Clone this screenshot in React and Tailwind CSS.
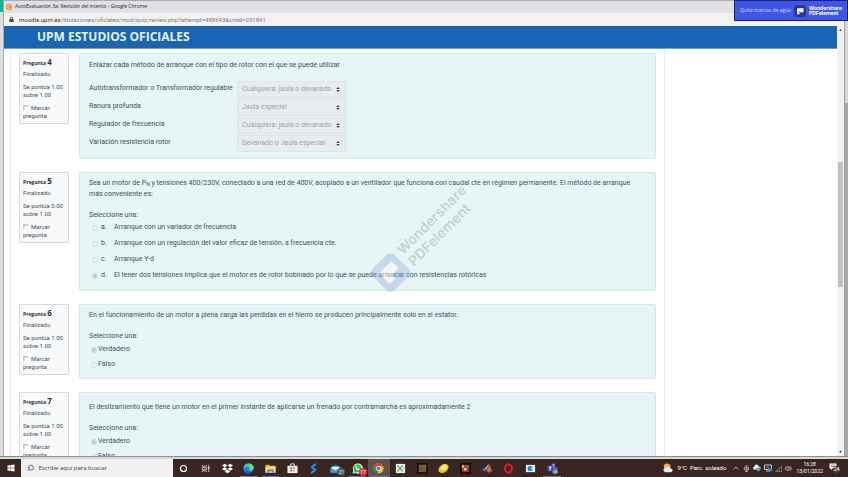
import { FaWindows, FaDropbox, FaLock } from "react-icons/fa";
import { Search, ChevronUp, Volume2 } from "lucide-react";

const OPTIONS = ["Cualquiera: jaula o devanado", "Jaula especial", "Devanado o Jaula especial"];

const MATCHES = [
  { id: "m1", label: "Autotransformador o Transformador regulable", value: OPTIONS[0] },
  { id: "m2", label: "Ranura profunda", value: OPTIONS[1] },
  { id: "m3", label: "Regulador de frecuencia", value: OPTIONS[0] },
  { id: "m4", label: "Variación resistencia rotor", value: OPTIONS[2] },
];

const CHOICES = [
  { key: "a.", text: "Arranque con un variador de frecuencia" },
  { key: "b.", text: "Arranque con un regulación del valor eficaz de tensión, a frecuencia cte." },
  { key: "c.", text: "Arranque Y-d" },
  { key: "d.", text: "El tener dos tensiones implica que el motor es de rotor bobinado por lo que se puede arrancar con resistencias rotóricas", checked: true },
];

const radioClass =
  "size-[6px] shrink-0 appearance-none rounded-full border border-[#d3dadb] bg-[#eef5f6] checked:bg-[#a9b1b3] checked:shadow-[inset_0_0_0_1px_#e4e9ea]";

function PdfLogo({ className, back, front }) {
  return (
    <svg viewBox="0 0 24 24" className={className} aria-hidden="true">
      <rect width="24" height="24" rx="5" fill={back} />
      <path d="M6 6.5h13v8h-7v-1H6z M6 14.5h5v4H6z" fill={front} />
    </svg>
  );
}

function WatermarkLogo() {
  return (
    <svg viewBox="0 0 31 31" className="size-[31px] shrink-0" aria-hidden="true">
      <path
        fillRule="evenodd"
        d="M6 0h19a6 6 0 0 1 6 6v19a6 6 0 0 1-6 6H6a6 6 0 0 1-6-6V6a6 6 0 0 1 6-6zM7 8v15h7v-5h10V8z"
        fill="#8fabd6"
        fillOpacity=".38"
      />
      <path d="M7 8h17v10H14v5H7z" fill="#fff" fillOpacity=".45" />
    </svg>
  );
}

function InfoCard({ number, mark }) {
  return (
    <aside className="h-[71px] w-[50px] shrink-0 rounded-[1px] border border-[#d3d9de] bg-[#f8f9fa] px-[3px] pt-[2px] text-[6px] leading-[8px] text-[#4b4f53]">
      <h3 className="whitespace-nowrap font-['Open_Sans',sans-serif] text-[5px] font-bold leading-[12px] text-[#2c3033]">
        Pregunta <span className="text-[8px]">{number}</span>
      </h3>
      <div className="mt-px flex flex-col gap-[5px]">
        <p>Finalizado</p>
        <p>
          Se puntúa {mark}
          <br />
          sobre 1.00
        </p>
        <a href="#marcar" className="block">
          <svg viewBox="0 0 6 6" className="mr-[3px] inline-block size-[5px] align-baseline" aria-hidden="true">
            <path d="M1 0v6M1 .8h1.600l.8.6h2v-.9" fill="none" stroke="#7b8388" strokeWidth=".7" />
          </svg>
          Marcar pregunta
        </a>
      </div>
    </aside>
  );
}

function Question({ number, mark, children }) {
  return (
    <section className="flex shrink-0 items-start gap-[10px]">
      <InfoCard number={number} mark={mark} />
      <div className="min-w-0 flex-1 rounded-[2px] border border-[#cfe9ea] bg-[#e7f5f6] pl-[9px] pr-3 pt-[5px] text-[7px] leading-[11px] text-[#38535c]">
        {children}
      </div>
    </section>
  );
}

function TrueFalse({ name }) {
  return (
    <fieldset className="mt-[10px] pb-2">
      <legend>Seleccione una:</legend>
      <div className="mt-[2px] flex flex-col gap-1 pl-[2px]">
        {["Verdadero", "Falso"].map((v, i) => (
          <label key={v} className="flex items-center gap-px">
            <input type="radio" name={name} disabled defaultChecked={i === 0} className={radioClass} />
            {v}
          </label>
        ))}
      </div>
    </fieldset>
  );
}

const svg = (children) => (
  <svg viewBox="0 0 24 24" className="size-[11px]" aria-hidden="true">
    {children}
  </svg>
);

const APPS = [
  { name: "Cortana", icon: svg(<circle cx="12" cy="12" r="6.500" fill="none" stroke="#fff" strokeWidth="2.500" />) },
  {
    name: "Vista de tareas",
    icon: svg(
      <g fill="none" stroke="#d8d3d1" strokeWidth="1.800">
        <path d="M5 4v3h9V4M5 20v-3h9v3M5 10h9v4H5zM19 4v16" />
        <path d="M18 9h2v3h-2z" fill="#e8e4e2" />
      </g>
    ),
  },
  { name: "Dropbox", icon: <FaDropbox className="size-[11px] text-white" /> },
  {
    name: "Edge",
    open: true,
    icon: svg(
      <>
        <circle cx="12" cy="12" r="11" fill="#1b8fe6" />
        <path d="M1 11C2 4 7 1 12 1c7 0 11 5 11 9 0 4-3 6-6 6-3 0-4-1-3-3 1-3-1-5-4-5-4 0-7 1-9 3z" fill="#3cc3c0" />
        <path d="M14 1c6 1 9 5 9 9 0 4-3 6-6 6-3 0-4-1-3-3 2-4 2-8 0-12z" fill="#6bdc7c" />
        <path d="M9 10c-3 5 1 11 11 9-3 4-7 4-9 4-6-2-7-10-2-13z" fill="#0f5fb8" />
      </>
    ),
  },
  {
    name: "Explorador",
    open: true,
    icon: svg(
      <>
        <path d="M1 4h8l2 2h12v15H1z" fill="#f0b429" />
        <path d="M1 8h22v13H1z" fill="#ffd968" />
        <path d="M5 21v-7h14v7h-4v-3H9v3z" fill="#3b8ede" />
      </>
    ),
  },
  {
    name: "Store",
    icon: svg(
      <>
        <path d="M8 6V2h8v4" fill="none" stroke="#eee" strokeWidth="2" />
        <path d="M1 6h22v16H1z" fill="#f5f5f5" />
        <path d="M7 9h4v4H7z" fill="#e8502a" />
        <path d="M13 9h4v4h-4z" fill="#7ab51d" />
        <path d="M7 15h4v4H7z" fill="#1e9be0" />
        <path d="M13 15h4v4h-4z" fill="#f6b300" />
      </>
    ),
  },
  {
    name: "Asistente",
    icon: svg(<path d="M17 2 8 9l8 6-9 7" fill="none" stroke="#2f9cf0" strokeWidth="4" strokeLinejoin="round" />),
  },
  {
    name: "Correo",
    badge: "21",
    icon: svg(
      <>
        <path d="M1 9 12 2l11 7v12H1z" fill="#1267b4" />
        <path d="M4 8h16v8H4z" fill="#fff" />
        <path d="m1 9 11 7 11-7v12H1z" fill="#3aa0ea" />
      </>
    ),
  },
  {
    name: "WhatsApp",
    badge: "17",
    open: true,
    icon: svg(
      <>
        <path d="m1 23 2-6A11 11 0 1 1 8 22z" fill="#fff" />
        <path d="m3 21 2-4a9 9 0 1 1 4 3z" fill="#34bf49" />
        <path d="M8 7c-2 4 4 10 8 9l1-3-3-1-1 1-3-3 1-1-1-3z" fill="#fff" />
      </>
    ),
  },
  {
    name: "Chrome",
    active: true,
    open: true,
    icon: svg(
      <>
        <circle cx="12" cy="12" r="11" fill="#fbc116" />
        <path d="M2.500 6.500A11 11 0 0 1 22 7H12l-5 7z" fill="#e33b2e" />
        <path d="M2.500 6.500 8 15l4 2-2 6A11 11 0 0 1 2.500 6.500z" fill="#229342" />
        <circle cx="12" cy="12" r="5.200" fill="#fff" />
        <circle cx="12" cy="12" r="4" fill="#2a7de1" />
      </>
    ),
  },
  {
    name: "Hoja",
    icon: svg(
      <>
        <path d="M2 2h20v20H2z" fill="#edf5e9" />
        <path d="m5 5 12 14M17 5 5 19" stroke="#4f9f58" strokeWidth="2.500" />
        <path d="M16 9h5M16 13h5" stroke="#8cc08e" strokeWidth="1.500" />
      </>
    ),
  },
  {
    name: "Bloques",
    icon: svg(
      <>
        <path d="M0 0h24v24H0z" fill="#14100c" />
        <path d="M4 4h16v16H4z" fill="#84573a" />
        <path d="M4 4h16v5H4z" fill="#5d6b34" />
        <path d="M8 12h3v3H8zM14 15h3v3h-3z" fill="#5f3b25" />
      </>
    ),
  },
  {
    name: "Limón",
    icon: svg(
      <>
        <ellipse cx="12" cy="12" rx="12" ry="8.500" transform="rotate(-35 12 12)" fill="#f4bd2c" />
        <ellipse cx="13" cy="10" rx="8" ry="5" transform="rotate(-35 13 10)" fill="#ffe873" />
      </>
    ),
  },
  {
    name: "Juego",
    icon: svg(
      <>
        <path d="M0 0h24v24H0z" fill="#120d0c" />
        <path d="M4 4h16v16H4z" fill="#a83a24" />
        <path d="M4 4h5v7H4z" fill="#d8b53a" />
        <path d="M13 5h6v5h-6z" fill="#4f8d3a" />
        <path d="M9 11h5v5H9z" fill="#e8d9b0" />
      </>
    ),
  },
  {
    name: "Matlab",
    icon: svg(
      <>
        <path d="m0 14 7-4 4 4-5 4z" fill="#3e86c8" />
        <path d="M7 10c3-1 5-7 8-8l-4 13z" fill="#7db7dd" />
        <path d="M15 2c3 3 5 13 9 17-4-2-6-1-9 3-1-3-3-4-6-4 4-3 5-10 6-16z" fill="#e2622a" />
      </>
    ),
  },
  {
    name: "Opera",
    icon: svg(<ellipse cx="12" cy="12" rx="7.500" ry="9" fill="none" stroke="#e21b2b" strokeWidth="4.500" />),
  },
  {
    name: "Panel",
    icon: svg(
      <>
        <path d="M2 4h20v16H2z" fill="#e3f1fa" />
        <path d="M6 7h10v10H6z" fill="#1c86d1" />
        <path d="M13 10h2v4h-2z" fill="#bfe1f6" />
      </>
    ),
  },
  {
    name: "Teams",
    open: true,
    icon: svg(
      <>
        <circle cx="14" cy="5" r="4" fill="#7b83eb" />
        <path d="M9 9h14v8a6 6 0 0 1-12 3z" fill="#5b64c9" />
        <path d="M1 6h12v12H1z" fill="#4651b5" />
        <path d="M4 9h6M7 9v7" stroke="#fff" strokeWidth="2" />
        <circle cx="19" cy="19" r="4.500" fill="#92c353" />
      </>
    ),
  },
];

function Taskbar() {
  return (
    <footer className="flex h-[18px] shrink-0 items-stretch bg-[#392622] font-['Roboto',sans-serif] text-white">
      <button type="button" aria-label="Inicio" className="flex w-[21px] items-center justify-center">
        <FaWindows className="size-2" />
      </button>
      <label className="flex w-[152px] items-center gap-1 bg-[#f2f1f1] pl-[6px]">
        <Search className="size-2 -scale-x-100 text-[#222]" strokeWidth={2} />
        <input
          aria-label="Buscar"
          placeholder="Escribe aquí para buscar"
          className="w-full bg-transparent font-['Open_Sans',sans-serif] text-[6px] leading-[10px] outline-none placeholder:text-[#3a3a3a]"
        />
      </label>
      <nav className="flex w-[390px]">
        {APPS.map((a) => (
          <button
            key={a.name}
            type="button"
            aria-label={a.name}
            className={
              "relative flex flex-1 items-center justify-center " +
              (a.active ? "bg-[#62514e]" : "")
            }
          >
            {a.icon}
            {a.open && <span className="absolute inset-x-[2px] bottom-0 h-px bg-[#6a68d8]" />}
            {a.badge && (
              <span
                className={
                  "absolute bottom-px right-px flex size-2 items-center justify-center rounded-full text-[5px] leading-none " +
                  (a.badge === "17" ? "bg-[#e02a34]" : "bg-[#4a5560]")
                }
              >
                {a.badge}
              </span>
            )}
          </button>
        ))}
      </nav>
      <div className="ml-auto flex items-center pr-2 text-[6px] leading-[8px]">
        <svg viewBox="0 0 24 24" className="mr-1 size-[10px]" aria-hidden="true">
          <circle cx="10" cy="9" r="8" fill="#f8b52c" />
          <path d="M6 22a5 5 0 0 1 0-10 7 7 0 0 1 12 1 4.500 4.500 0 0 1 1 9z" fill="#dcebf7" />
        </svg>
        <span className="mr-[3px]">9°C</span>
        <span className="mr-[6px]">Parc. soleado</span>
        <div className="mr-[3px] flex items-center gap-[3px]">
          <ChevronUp className="size-2" />
          <svg viewBox="0 0 16 16" className="size-[7px]" fill="none" stroke="#ddd8d6" strokeWidth="1.500" aria-hidden="true">
            <path d="M5 2h6M3 5h10v6H3zM8 11v4M5 15h6" />
            <circle cx="8" cy="8" r="1.500" />
          </svg>
          <svg viewBox="0 0 16 16" className="size-2" aria-hidden="true">
            <path d="M3 11a3 3 0 0 1 0-6 4 4 0 0 1 8 0 3 3 0 0 1 2 6z" fill="#eef3f8" />
            <circle cx="11" cy="11" r="4" fill="#2d83d6" />
            <path d="M9 11h4" stroke="#fff" />
          </svg>
          <svg viewBox="0 0 16 16" className="size-2" aria-hidden="true">
            <path d="M1 2h14v9H1zM4 14h7" fill="none" stroke="#fff" strokeWidth="1.500" />
            <path d="M4 8l3-3 3 3" fill="none" stroke="#fff" />
            <path d="M9 8h7v7H9z" fill="#2b86d9" />
          </svg>
          <svg viewBox="0 0 16 16" className="size-[7px]" fill="none" stroke="#bdb5b2" aria-hidden="true">
            <path d="M1 15 15 2v13zM6 15v-4M10 15V7" />
          </svg>
          <Volume2 className="size-[7px]" />
        </div>
        <time className="mr-[6px] pl-px text-center text-[5px] leading-[7px]">
          16:28
          <br />
          13/01/2022
        </time>
        <button type="button" aria-label="Notificaciones" className="relative flex h-[10px] w-[11px]">
          <svg viewBox="0 0 16 16" className="size-2" aria-hidden="true">
            <path d="M1 1h14v10H7l-3 3v-3H1z" fill="#fff" />
            <path d="M3 4h10M3 7h10" stroke="#392622" />
          </svg>
          <span className="absolute bottom-0 right-0 flex size-[7px] items-center justify-center rounded-full bg-[#4d3e3b] text-[5px] leading-none">
            24
          </span>
        </button>
      </div>
    </footer>
  );
}

function Scrollbar() {
  return (
    <div className="flex w-[7px] shrink-0 flex-col items-center bg-[#f1f1f1] py-[3px]">
      <svg viewBox="0 0 4 3" className="h-[2px] w-[3px]" aria-hidden="true">
        <path d="M0 3 2 0l2 3z" fill="#333" />
      </svg>
      <div className="flex-[131]" />
      <div className="w-[5px] flex-[125] bg-[#c1c1c1]" />
      <div className="flex-[164]" />
      <svg viewBox="0 0 4 3" className="h-[2px] w-[3px]" aria-hidden="true">
        <path d="M0 0h4L2 3z" fill="#333" />
      </svg>
    </div>
  );
}

export default function App() {
  return (
    <div className="relative flex h-screen flex-col overflow-hidden bg-[#e3e3e3] font-['Roboto',sans-serif]">
      <div className="flex min-h-0 flex-1">
        <div className="w-1 shrink-0 border-r border-[#a9a9a9] bg-[#dedede]">
          <div className="h-3 bg-[#16b48c]" />
        </div>
        <div className="flex min-w-0 flex-1 flex-col border-t border-[#a8abb0] bg-white">
          <div className="flex h-3 shrink-0 items-center gap-[3px] bg-[#dee0e4] pl-[2px] font-['Open_Sans',sans-serif] text-[5px] text-[#222]">
            <svg viewBox="0 0 12 12" className="size-[6px]" aria-hidden="true">
              <circle cx="6" cy="6" r="6" fill="#f58220" />
              <path d="M8.500 4A3 3 0 1 0 8.500 8" fill="none" stroke="#fff" strokeWidth="1.500" />
            </svg>
            AutoEvaluación 3a: Revisión del intento - Google Chrome
          </div>
          <div className="flex h-[13px] shrink-0 items-center gap-[5px] bg-[#f2f2f3] pl-[5px] text-[6px] text-[#7b7e81]">
            <FaLock className="size-[5px] text-[#444]" />
            <span>
              <span className="text-[#333]">moodle.upm.es</span>
              /titulaciones/oficiales/mod/quiz/review.php?attempt=488643&amp;cmid=201841
            </span>
          </div>
          <div className="flex min-h-0 flex-1">
            <div className="flex min-w-0 flex-1 flex-col">
              <header className="flex h-[23px] shrink-0 items-center border-b border-[#6f9fd3] bg-[#1765b3] pl-[33px]">
                <h1 className="font-['Open_Sans',sans-serif] text-[12px] font-bold leading-4 text-[#e9f1f9]">
                  UPM ESTUDIOS OFICIALES
                </h1>
              </header>
              <div className="flex min-h-0 flex-1 pl-[6px]">
                <main className="relative flex min-w-0 flex-1 flex-col gap-[13px] overflow-hidden border-x border-[#e6e8ea] pl-2 pr-2 pt-1">
                  <Question number="4" mark="1.00">
                    <p className="pt-px">Enlazar cada método de arranque con el tipo de rotor con el que se puede utilizar</p>
                    <div className="mt-[9px] pb-[6px]">
                      {MATCHES.map((m) => (
                        <div key={m.id} className="flex h-[18px] items-center">
                          <label htmlFor={m.id} className="w-[148px] whitespace-nowrap pb-[2px]">
                            {m.label}
                          </label>
                          <div className="relative w-[109px]">
                            <select
                              id={m.id}
                              disabled
                              defaultValue={m.value}
                              className="block h-[17px] w-full appearance-none rounded-[1px] border border-[#dde4e8] bg-[#e8ecf0] pl-1 text-[7px] text-[#9aa5ab] opacity-100"
                            >
                              {OPTIONS.map((o) => (
                                <option key={o}>{o}</option>
                              ))}
                            </select>
                            <svg viewBox="0 0 4 6" className="pointer-events-none absolute right-[6px] top-[6px] h-[5px] w-[4px]" aria-hidden="true">
                              <path d="M0 2.500 2 0l2 2.500zM0 3.500h4L2 6z" fill="#343a40" />
                            </svg>
                          </div>
                        </div>
                      ))}
                    </div>
                  </Question>

                  <Question number="5" mark="0.00">
                    <p>
                      Sea un motor de P<sub className="text-[5px]">N</sub> y tensiones 400/230V, conectado a una red de 400V,
                      acoplado a un ventilador que funciona con caudal cte en régimen permanente. El método de arranque más
                      conveniente es:
                    </p>
                    <fieldset className="mt-[10px] pb-[9px]">
                      <legend>Seleccione una:</legend>
                      <div className="mt-px flex flex-col gap-[5px] pl-[3px]">
                        {CHOICES.map((c) => (
                          <label key={c.key} className="flex items-center">
                            <input type="radio" name="q5" disabled defaultChecked={c.checked} className={radioClass} />
                            <span className="ml-[3px] w-[13px]">{c.key}</span>
                            {c.text}
                          </label>
                        ))}
                      </div>
                    </fieldset>
                  </Question>

                  <Question number="6" mark="1.00">
                    <p>En el funcionamiento de un motor a plena carga las perdidas en el hierro se producen principalmente solo en el estator.</p>
                    <TrueFalse name="q6" />
                  </Question>

                  <Question number="7" mark="1.00">
                    <p className="pt-1">
                      El deslizamiento que tiene un motor en el primer instante de aplicarse un frenado por contramarcha es aproximadamente 2
                    </p>
                    <TrueFalse name="q7" />
                  </Question>

                  <div className="pointer-events-none absolute left-[350px] top-[174px] flex w-[125px] -rotate-45 items-center gap-[5px] font-['Inter',sans-serif] text-[14px] font-semibold leading-4 text-[#8e9799]/40">
                    <WatermarkLogo />
                    <p>
                      Wondershare
                      <br />
                      PDFelement
                    </p>
                  </div>
                </main>
                <div className="w-[172px] shrink-0" />
              </div>
            </div>
            <Scrollbar />
          </div>
        </div>
        <div className="flex w-1 shrink-0 flex-col border-l border-[#a3a3a3] bg-[#d6d6d6] pt-[103px]">
          <div className="flex-1 bg-[#a8a8a8]" />
        </div>
      </div>
      <div className="h-[3px] shrink-0 border-t border-[#8f8f8f] bg-[#d9d9d9]" />
      <Taskbar />

      <aside className="absolute right-0 top-0 flex h-[21px] w-[114px] items-center justify-between border border-[#1b2370] bg-[#4056e8] pl-[5px] pr-[5px] font-['Open_Sans',sans-serif] text-[5px] leading-[5px] text-white">
        <a href="#quitar" className="text-[#d5daf8]">Quita marcas de agua</a>
        <span className="flex items-center gap-[3px] font-['Inter',sans-serif] font-bold">
          <PdfLogo className="size-3" back="#2a3796" front="#fff" />
          <span>
            Wondershare
            <br />
            PDFelement
          </span>
        </span>
      </aside>
    </div>
  );
}
